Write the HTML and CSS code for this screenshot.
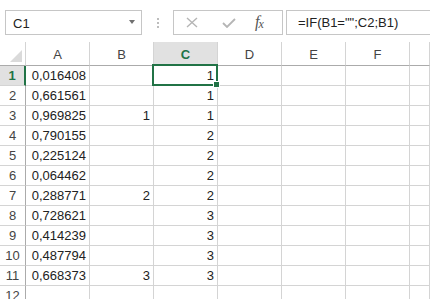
FILE: index.html
```html
<!DOCTYPE html>
<html lang="en">
<head>
    <meta charset="UTF-8">
    <title>Sheet1</title>
    <link rel="stylesheet" href="styles.css">
</head>
<body>
    <div class="toolbar">
        <div class="name-box">
            <span class="name-text">C1</span>
            <span class="name-arrow"></span>
        </div>
        <div class="grip"><span></span><span></span><span></span></div>
        <div class="fx-group">
            <svg class="icon" width="12" height="11" viewBox="0 0 12 11"><path d="M1 1 L11 10 M11 1 L1 10" stroke="#b5b5b5" stroke-width="1.4" fill="none"/></svg>
            <svg class="icon" width="14" height="10" viewBox="0 0 14 10"><path d="M1 5 L5 9 L13 1" stroke="#b5b5b5" stroke-width="1.8" fill="none"/></svg>
            <span class="fx">f<sub>x</sub></span>
        </div>
        <div class="formula">=IF(B1="";C2;B1)</div>
    </div>

    <div class="sheet">
        <!-- column headers -->
        <div class="hd corner"><span class="tri"></span></div>
        <div class="hd col">A</div>
        <div class="hd col">B</div>
        <div class="hd col active">C</div>
        <div class="hd col">D</div>
        <div class="hd col">E</div>
        <div class="hd col">F</div>
        <div class="hd col"></div>
    </div>
    <div class="sheet" id="rows"></div>

    <script>
        const data = [
            ["0,016408", "", "1"],
            ["0,661561", "", "1"],
            ["0,969825", "1", "1"],
            ["0,790155", "", "2"],
            ["0,225124", "", "2"],
            ["0,064462", "", "2"],
            ["0,288771", "2", "2"],
            ["0,728621", "", "3"],
            ["0,414239", "", "3"],
            ["0,487794", "", "3"],
            ["0,668373", "3", "3"],
            ["", "", ""]
        ];

        const rows = document.getElementById('rows');

        data.forEach((row, i) => {
            const num = document.createElement('div');
            num.className = 'hd row' + (i === 0 ? ' active' : '');
            num.textContent = i + 1;
            rows.appendChild(num);

            for (let c = 0; c < 7; c++) {
                const cell = document.createElement('div');
                cell.className = 'cell';
                if (c < 3) cell.textContent = row[c];
                if (i === 0 && c === 2) cell.classList.add('selected');
                rows.appendChild(cell);
            }
        });
    </script>
</body>
</html>
```

FILE: styles.css
```css
body {
    margin: 0;
    background: #fff;
    font-family: "Liberation Sans", Arial, sans-serif;
    font-size: 13px;
    color: #222;
    overflow: hidden;
}
.toolbar {
    display: flex;
    align-items: stretch;
    height: 25px;
    padding: 10px 0 0 5px;
    margin-bottom: 7px;
}
.name-box {
    width: 137px;
    box-sizing: border-box;
    border: 1px solid #c6c6c6;
    display: flex;
    align-items: center;
    justify-content: space-between;
    padding: 0 6px 0 7px;
}
.name-text {
    padding-top: 1px;
}
.name-arrow {
    width: 0;
    height: 0;
    border-left: 3px solid transparent;
    border-right: 3px solid transparent;
    border-top: 4px solid #6f6f6f;
    margin-top: -2px;
}
.grip {
    width: 31px;
    display: flex;
    flex-direction: column;
    align-items: center;
    justify-content: center;
    gap: 2px;
}
.grip span {
    width: 2px;
    height: 2px;
    background: #bdbdbd;
}
.fx-group {
    width: 110px;
    box-sizing: border-box;
    border: 1px solid #c6c6c6;
    display: flex;
    align-items: center;
    padding-left: 12px;
    gap: 0;
}
.fx-group .icon:first-child {
    margin-right: 24px;
}
.fx {
    margin-left: 19px;
    font-family: "Liberation Serif", serif;
    font-style: italic;
    font-size: 16px;
    color: #555;
}
.fx sub {
    font-size: 12px;
    vertical-align: -1px;
    margin-left: -1px;
}
.formula {
    flex: 1;
    margin-left: 3px;
    border: 1px solid #c6c6c6;
    border-right: none;
    padding: 4px 0 0 11px;
    white-space: nowrap;
    color: #222;
}
.sheet {
    display: grid;
    grid-template-columns: 26px repeat(6, 64px) 1fr;
}
.hd {
    box-sizing: border-box;
    color: #444;
    background: #fff;
}
.corner, .col {
    height: 24px;
    border-bottom: 1px solid #ababab;
}
.corner {
    border-right: 1px solid #d4d4d4;
    position: relative;
}
.tri {
    position: absolute;
    left: 10px;
    top: 8px;
    width: 0;
    height: 0;
    border-left: 12px solid transparent;
    border-bottom: 12px solid #dadada;
}
.col {
    border-right: 1px solid #d4d4d4;
    text-align: center;
    line-height: 22px;
    padding-top: 2px;
}
.col.active {
    background: #e1e1e1;
    color: #217346;
    font-weight: bold;
    border-bottom: 2px solid #217346;
}
.row {
    height: 20px;
    border-right: 1px solid #ababab;
    border-bottom: 1px solid #d4d4d4;
    text-align: center;
    line-height: 18px;
    padding-top: 1px;
}
.row.active {
    background: #e1e1e1;
    color: #217346;
    font-weight: bold;
    border-right: 2px solid #217346;
}
.cell {
    height: 20px;
    box-sizing: border-box;
    border-right: 1px solid #d4d4d4;
    border-bottom: 1px solid #d4d4d4;
    text-align: right;
    padding: 1px 3px 0 0;
    line-height: 18px;
    color: #222;
    position: relative;
}
.selected::after {
    content: "";
    position: absolute;
    top: -2px;
    left: -2px;
    right: -1px;
    bottom: -1px;
    border: 2px solid #217346;
}
.selected::before {
    content: "";
    position: absolute;
    right: -3px;
    bottom: -3px;
    width: 5px;
    height: 5px;
    background: #217346;
    border: 1px solid #fff;
    z-index: 1;
}
```
